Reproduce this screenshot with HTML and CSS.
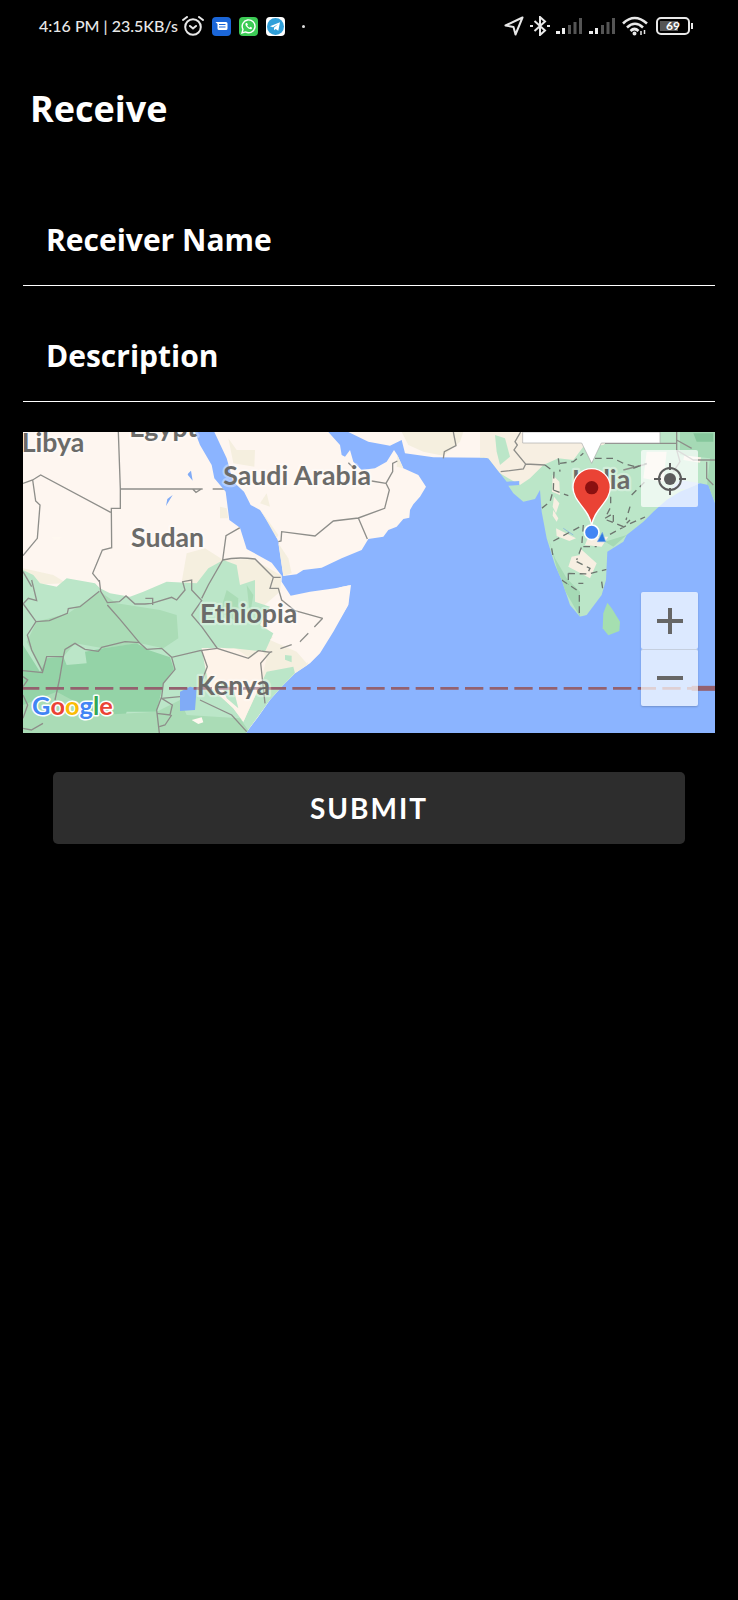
FILE: index.html
```html
<!DOCTYPE html>
<html lang="en">
<head>
<meta charset="utf-8">
<meta name="viewport" content="width=device-width, initial-scale=1">
<title>Receive</title>
<link rel="stylesheet" href="styles.css">
</head>
<body>
<header class="status">
  <div class="status-left">
    <span class="clock">4:16 PM | 23.5KB/s</span>
    <svg class="alarm" width="22" height="20" viewBox="0 0 22 20" fill="none" stroke="#e8e8e8" stroke-width="2" stroke-linecap="round"><circle cx="11" cy="11" r="7.8"/><path d="M1 4 5 1M21 4 17 1M8 10l3 2.5 3-2.5"/></svg>
    <svg width="19" height="19" viewBox="0 0 19 19"><rect width="19" height="19" rx="4" fill="#1b66d8"/><path d="M3.500 5H14a1.500 1.500 0 0 1 1.500 1.500v5A1.500 1.500 0 0 1 14 13H7a1.500 1.500 0 0 1-1.500-1.500V7z" fill="#fff"/><path d="M7 7.500h6.500M7 10h6.500" stroke="#1b66d8"/></svg>
    <svg width="19" height="19" viewBox="0 0 19 19"><rect width="19" height="19" rx="4" fill="#3ccb55"/><path d="M3 16l1-3.600a6.400 6.400 0 1 1 2.500 2.500z" fill="none" stroke="#fff" stroke-width="1.400"/><path d="M7 6q-1.500 1.500.8 4t4.500 2.200q1.400-1 .5-1.700l-1.300-.7-1 .9q-1.600-.6-2.300-2.200l.7-.9L8 6z" fill="#fff"/></svg>
    <svg width="19" height="19" viewBox="0 0 19 19"><rect width="19" height="19" rx="4" fill="#fff"/><circle cx="9.500" cy="9.500" r="8.500" fill="#2f9fd9"/><path d="M4 9.300 14 5.200l-1.700 8.600-2.700-1.900-1.400 1.400-.3-2.500 4-3.600-5 3z" fill="#fff"/></svg>
    <i class="dot"></i>
  </div>
  <div class="status-right">
    <svg width="20" height="20" viewBox="0 0 20 20" fill="none" stroke="#e8e8e8" stroke-width="2" stroke-linejoin="round"><path d="M18.500 1.500 1.500 9.500l8 1.500 2 7.500z"/></svg>
    <svg width="20" height="20" viewBox="0 0 20 20" fill="none" stroke="#e8e8e8" stroke-width="2"><path d="m4.500 5 10.500 9.500-5 4.500V1l5 4.500L4.500 15"/><path d="M0 10h3M17 10h3"/></svg>
    <svg width="27" height="18" viewBox="0 0 27 18"><path d="M0 14h4v3H0zM6 11h3v6H6z" fill="#eee"/><path d="M12 8h3v9h-3zM17.500 5h3v12h-3zM23 1h3v16h-3z" fill="#555"/></svg>
    <svg width="27" height="18" viewBox="0 0 27 18"><path d="M0 14h4v3H0zM6 11h3v6H6z" fill="#eee"/><path d="M12 8h3v9h-3zM17.500 5h3v12h-3zM23 1h3v16h-3z" fill="#555"/></svg>
    <svg width="26" height="20" viewBox="0 0 26 20" fill="none" stroke="#e8e8e8" stroke-width="2.600"><path d="M1 7.500q11.500-11 24 0M5 11.500q8-7.500 16 0M8.500 15q4-4 8 0"/><circle cx="12.500" cy="17.500" r="1" stroke-width="2"/><path d="M19 15v4M22.500 14v4" stroke-width="1.500"/></svg>
    <span class="battery"><span class="battery-level">69</span></span>
  </div>
</header>

<main class="page">
  <h1 class="title">Receive</h1>
  <form class="form">
    <input class="field" type="text" aria-label="Receiver Name" placeholder="Receiver Name">
    <input class="field" type="text" aria-label="Description" placeholder="Description">

    <div class="map">
      <svg class="map-canvas" viewBox="9 21 2076 903" role="img" aria-label="Map">
        <rect x="9" y="21" width="2076" height="903" fill="#8bb4ff"/>

        <!-- Africa -->
        <clipPath id="africa"><path d="M9 21H525L540 60 575 120 583 160 617 200 628 285 660 308 680 372 755 413 785 452 785 470 812 512 870 500 945 490 993 480 985 540 940 620 900 685 870 715 825 745 790 780 750 825 715 875 678 924H9Z"/></clipPath>
        <g clip-path="url(#africa)">
          <rect x="9" y="21" width="1000" height="903" fill="#fef6f0"/>
          <path d="M500 385 555 370 610 405 700 402 785 452 780 500 710 560 760 640 870 660 860 740 780 780 650 900 560 800 480 500ZM9 430 100 450 140 475 9 480ZM600 245l20 5 5 30-25 0Z" fill="#f5efdf"/>
          <path d="M9 435 40 450 60 475 110 485 140 460 225 475 240 490 270 505 330 515 370 500 440 470 530 475 565 430 610 405 650 420 660 480 705 465 705 530 750 545 720 600 760 625 735 680 640 670 590 675 545 670 565 780 640 850 670 890 740 740 820 725 825 745 750 825 678 924H9Z" fill="#bbe6c8"/>
          <path d="M50 590 145 565 240 500 290 535 420 555 470 570 475 640 430 670 360 655 250 670 165 655 130 695 80 695 65 740 20 650Z" fill="#aadcb6"/>
          <path d="M9 660 60 740 80 700 130 695 140 720 200 715 195 680 250 670 350 655 385 675 450 697 462 733 430 775 410 860 320 860 300 924H9Z" fill="#94d3a7"/>
          <path d="M9 840 110 800 240 870 410 860 480 825 500 870 660 880 690 924H9Z" fill="#aadcb6"/>
          <path d="M545 670 600 668 650 672 690 700 725 675 740 700 720 780 670 890 640 850 570 785Z" fill="#fef3e9"/>
          <path d="M750 645 860 540 990 470 985 540 900 680 860 715 830 680Z" fill="#fef6f0"/>
          <path d="M600 770 640 790 655 850 620 820ZM795 690l20 2 0 20-20-8Z" fill="#bbe6c8"/>
          <path d="M620 495 655 520 650 590 600 560ZM680 480 700 510 690 570Z" fill="#aadcb6"/>
          <path d="M480 800 510 785 530 790 525 855 480 858ZM505 145l8-8 5 30-15-18ZM458 210 438 243 442 222Z" fill="#80abf6"/>
          <path d="M95 335h30l-8 9H102ZM515 885l30-8 5 15-15 5Z" fill="#fff8f0"/>
          <g class="border">
            <path d="M9 175 38 165 62 150 272 262M295 21 301 192V250H274L275 368 247 375 218 445 238 470M301 192H548M578 192H614M518 192l10 10 16-10M38 165 47 228 60 240 52 340 9 392M660 308 618 332 608 405 565 480 545 520M608 405Q650 395 705 402L760 457H782M760 457 750 490H775L785 525 825 557 908 580"/>
            <path d="M908 580 882 607 840 650 750 682" stroke-dasharray="36 26"/>
            <path d="M238 465 242 499 262 533 298 530 318 513 345 537 375 537 395 535 455 517 470 525 495 495 488 470 515 465V495L545 527 515 570 545 605 592 670 685 700 715 677 750 682 722 715 735 835M376 520h22v20"/>
            <path d="M10 537 48 590 88 587 142 565 145 551 180 545 238 499M48 590 22 630 35 675 68 740 80 695H130M9 737 68 743M262 540 300 583 360 655 380 673 425 670 455 697 540 677 592 670M130 695 135 673 165 655 195 673 235 679 245 667 315 650 360 653M130 695 118 765 105 825M455 697 465 733 430 775 425 815 410 855 418 924M545 677 562 725 535 795M540 825 635 870 680 920M425 820 480 815M425 820 457 840 450 870 410 865M455 870 435 900 418 905M9 755l14 10-14 20M9 810l14 30-14 40M9 910l25 5 35-20M9 537 25 520 50 527 35 465M9 440 35 485"/>
          </g>
        </g>

        <!-- Arabian peninsula -->
        <path d="M583 21H925L960 60 965 90 975 95 990 75 1000 110 1025 135 1065 130 1100 110 1122 75 1132 90 1150 130 1195 150 1218 185 1200 215 1180 238 1170 255 1168 278 1150 282 1130 305 1105 315 1090 335 1045 342 1025 375 965 400 905 428 850 435 830 448 790 453 775 350 760 315 720 255 692 240 672 200 640 170 620 100Z" fill="#fef6f0"/>
        <path d="M625 40 650 75 705 75 703 125 640 115ZM740 205 750 245 720 235ZM775 355 805 400 815 445 790 453ZM722 255 775 330 770 340ZM1132 90 1150 130 1130 125Z" fill="#f5efdf"/>
        <path class="border" d="M775 350 783 348 785 320 885 333 940 288 1015 279 1094 250 1108 195 1098 175 1118 140 1118 115 1132 108M1015 279 1042 342M1055 168 1098 175M985 113l12 12"/>
        <path d="M985 21 1045 50 1110 62 1145 45 1155 85 1240 97 1390 98V21Z" fill="#fef6f0"/>
        <path d="M1145 21 1165 60 1210 80 1270 92 1320 50 1330 21Z" fill="#f5efdf"/>
        <path class="border" d="M1270 100 1273 80 1308 62 1300 21"/>

        <!-- India and Sri Lanka -->
        <clipPath id="india"><path d="M0 21V97L25 100 60 145 80 170 118 168V180L85 182 100 205 130 230 165 222 180 195 185 260 200 340 225 420 245 465 270 540 300 575 320 570 365 510 378 465 382 380 430 350 440 330 490 290 520 260 560 225 600 200 660 175 685 180 705 235V21Z"/></clipPath>
        <g transform="translate(1380 0)">
          <g clip-path="url(#india)">
            <rect y="21" width="706" height="560" fill="#bbe6c8"/>
            <path d="M0 21H420L370 60 310 65 280 105 235 100 190 120 150 160 120 180 60 145 0 100ZM218 150l20 20 2 40-24-10ZM222 215l16 20-10 30-10-20ZM220 255l15 25-5 10-12-18ZM228 310l60 30-20 8-38-15ZM300 370l50 45-20 45-65-35 10-30 25-5ZM325 335h60l-20 30-50-5ZM620 55l50 8-10 50-50-8ZM500 80l60 0-10 90-60-10Z" fill="#f7efe2"/>
            <path d="M45 30 75 40 90 95 60 120 50 80Z" fill="#bbe6c8"/>
            <path d="M600 21H706V230L680 190 690 100 600 90ZM205 340 225 400 260 460 300 500 300 575 245 480ZM375 350 440 330 400 365Z" fill="#a5d9b5"/>
            <path d="M640 25h60v25h-50Z" fill="#86c79c"/>
            <path d="M575 190 600 165 660 175 640 195Z" fill="#b8cff8"/>
            <path class="border" d="M62 140 130 132 137 117 102 75 112 60 105 50 122 21M137 117 195 120M375 55H590M590 21V75L640 105H705M590 75 600 110 580 140M680 110V160L700 180M590 45l45 25M430 135l70-18"/>
            <path class="state" d="M195 120 222 140 220 195 210 230 185 250M220 195 265 212M240 115 280 110 310 85M345 100H400L430 115 465 125M460 130 500 115M235 100l5 40M392 215V245M390 250l-15 30 25-15 0 25M450 245l-12 40M380 285l50 20 20-20M390 328l60-32 45-20M220 348 310 300M215 370l5 30M310 300l-5 65-15 40M310 365H350M290 410l40 20-10 20M265 445l60 2 55-14M265 445V480M455 210l40-40"/>
            <path class="state" d="M245 465 290 495M295 475H310M298 510v55M365 470l5 35"/>
          </g>
          <path d="M382 533 395 550 420 590 418 618 385 631 368 610 370 565Z" fill="#a5dfb0"/>
          <path d="M250 310 280 330M352 350l15-28 10 28Z" fill="#2e79e0" stroke="#78a9e5" stroke-width="2"/>
        </g>

        <path d="M3 790H2085" stroke="#94616f" stroke-width="8" stroke-dasharray="55 19"/>
        <path d="M2015 790H2085" stroke="#94616f" stroke-width="15"/>

        <g class="label">
          <text x="5" y="80">Libya</text>
          <text x="328" y="35">Egypt</text>
          <text x="610" y="180">Saudi Arabia</text>
          <text x="333" y="365">Sudan</text>
          <text x="540" y="593">Ethiopia</text>
          <text x="530" y="810">Kenya</text>
          <text x="1656" y="193">India</text>
        </g>

        <text class="google" x="36" y="870"><tspan fill="#4285f4">G</tspan><tspan fill="#ea4335">o</tspan><tspan fill="#fbbc05">o</tspan><tspan fill="#4285f4">g</tspan><tspan fill="#34a853">l</tspan><tspan fill="#ea4335">e</tspan></text>

        <path d="M1508 21H1920V54H1744L1715 115 1685 54H1508Z" fill="#fff" stroke="#aaa" stroke-width="2"/>
        <path d="M1715 302C1708 250 1659 232 1659 187A56 56 0 0 1 1771 187C1771 232 1722 250 1715 302Z" fill="#ea4335" stroke="#fff" stroke-width="4"/>
        <circle cx="1715" cy="188" r="20" fill="#8b1010"/>
        <circle cx="1715" cy="322" r="22" fill="#4285f4" stroke="#fff" stroke-width="5"/>
      </svg>

      <button class="map-button locate" type="button" aria-label="My location">
        <svg width="32" height="32" viewBox="0 0 32 32" fill="none" stroke="#5c5c5c" stroke-width="2"><circle cx="16" cy="16" r="11"/><circle cx="16" cy="16" r="6" fill="#5c5c5c" stroke="none"/><path d="M16 0v7M16 25v7M0 16h7M25 16h7"/></svg>
      </button>
      <div class="zoom">
        <button class="map-button" type="button" aria-label="Zoom in"><svg width="26" height="26" viewBox="0 0 26 26" stroke="#666" stroke-width="4"><path d="M0 13h26M13 0v26"/></svg></button>
        <button class="map-button" type="button" aria-label="Zoom out"><svg width="26" height="26" viewBox="0 0 26 26" stroke="#666" stroke-width="4"><path d="M0 13h26"/></svg></button>
      </div>
    </div>

    <button class="submit" type="submit">SUBMIT</button>
  </form>
</main>
</body>
</html>
```
FILE: styles.css
```css
* {
  box-sizing: border-box;
}

body {
  margin: 0;
  min-height: 100vh;
  background: #000;
  color: #fff;
  font-family: "Open Sans", "Noto Sans", sans-serif;
}

svg {
  display: block;
  flex: none;
}

.status {
  display: flex;
  justify-content: space-between;
  align-items: center;
  height: 52px;
  padding: 0 45px 0 39px;
  color: #e8e8e8;
}

.status-left,
.status-right {
  display: flex;
  align-items: center;
}

.status-left {
  gap: 8px;
}

.status-right {
  gap: 6px;
}

.clock {
  font: 500 16px/20px Lato, sans-serif;
  white-space: nowrap;
}

.alarm {
  margin-left: -4px;
}

.dot {
  width: 3px;
  height: 3px;
  margin-left: 9px;
  border-radius: 50%;
  background: #ddd;
}

.battery {
  position: relative;
  display: flex;
  width: 34px;
  height: 18px;
  margin: 0 3px 0 2px;
  padding: 2px;
  border: 2px solid #e8e8e8;
  border-radius: 5px;
}

.battery::after {
  content: "";
  position: absolute;
  top: 4px;
  right: -5px;
  width: 2px;
  height: 6px;
  background: #e8e8e8;
}

.battery-level {
  flex: 1;
  background: linear-gradient(90deg, #555 69%, #000 69%);
  color: #fff;
  font: 700 12px/10px Lato, sans-serif;
  text-align: center;
}

.page {
  padding: 32px 23px 0;
}

.title {
  margin: 0;
  padding: 0 7px;
  font-size: 36px;
  font-weight: 700;
  line-height: 50px;
}

.form {
  display: flex;
  flex-direction: column;
  gap: 25px;
  padding-top: 61px;
}

.field {
  width: 100%;
  height: 91px;
  padding: 0 23px 2px;
  border: 0;
  border-bottom: 1px solid #fff;
  border-radius: 0;
  outline: 0;
  background: transparent;
  color: #fff;
  font: 700 30px/40px "Open Sans", "Noto Sans", sans-serif;
}

.field::placeholder {
  color: #fff;
  opacity: 1;
}

.map {
  position: relative;
  margin-top: 5px;
}

.map-canvas {
  width: 100%;
  height: auto;
}

.border,
.state {
  fill: none;
  stroke: #8e8e8a;
  stroke-width: 4;
}

.state {
  stroke: #6d756f;
  stroke-dasharray: 20 14;
}

.label {
  fill: #6b6b69;
  stroke: rgba(255, 255, 255, 0.35);
  stroke-width: 14px;
  stroke-linejoin: round;
  paint-order: stroke;
  font: 700 80px Lato, sans-serif;
}

.google {
  stroke: #fff;
  stroke-width: 9px;
  stroke-linejoin: round;
  paint-order: stroke;
  font: 700 76px Lato, sans-serif;
}

.map-button {
  display: grid;
  place-items: center;
  width: 57px;
  height: 57px;
  padding: 0;
  border: 0;
  border-radius: 2px;
  background: rgba(255, 255, 255, 0.7);
}

.locate {
  position: absolute;
  top: 18px;
  right: 17px;
}

.zoom {
  position: absolute;
  right: 17px;
  bottom: 27px;
  border-radius: 2px;
  box-shadow: 0 1px 2px rgba(0, 0, 0, 0.2);
}

.zoom .map-button + .map-button {
  border-top: 1px solid #c5cfdf;
}

.submit {
  height: 72px;
  margin: 14px 30px 0;
  border: 0;
  border-radius: 5px;
  background: #2d2d2d;
  color: #fff;
  font: 700 28px/36px Lato, sans-serif;
  letter-spacing: 2px;
}
```
